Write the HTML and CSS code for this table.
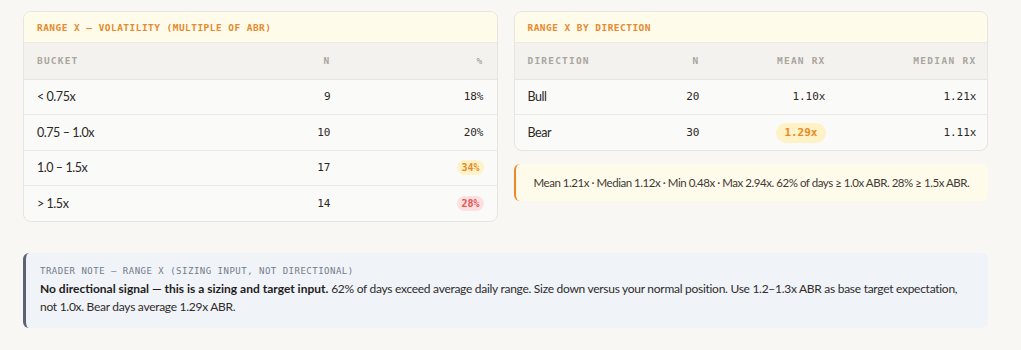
FILE: index.html
```html
<!DOCTYPE html>
<html lang="en">
<head>
<meta charset="utf-8">
<title>Range X</title>
<link rel="stylesheet" href="styles.css">
</head>
<body>
<main class="page">
  <div class="grid">
    <section class="card">
      <header class="card-head">RANGE X — VOLATILITY (MULTIPLE OF ABR)</header>
      <table class="tbl tbl-left">
        <colgroup><col><col class="c-n"><col class="c-pct"></colgroup>
        <thead>
          <tr><th class="l">BUCKET</th><th>N</th><th>%</th></tr>
        </thead>
        <tbody>
          <tr><td class="l">&lt; 0.75x</td><td class="num">9</td><td class="num">18%</td></tr>
          <tr><td class="l">0.75 – 1.0x</td><td class="num">10</td><td class="num">20%</td></tr>
          <tr><td class="l">1.0 – 1.5x</td><td class="num">17</td><td class="num"><span class="badge amber sm">34%</span></td></tr>
          <tr><td class="l">&gt; 1.5x</td><td class="num">14</td><td class="num"><span class="badge red sm">28%</span></td></tr>
        </tbody>
      </table>
    </section>
    <div class="col">
      <section class="card">
        <header class="card-head">RANGE X BY DIRECTION</header>
        <table class="tbl tbl-right">
          <colgroup><col class="d-dir"><col class="d-n"><col class="d-mean"><col class="d-med"></colgroup>
          <thead>
            <tr><th class="l">DIRECTION</th><th>N</th><th>MEAN RX</th><th>MEDIAN RX</th></tr>
          </thead>
          <tbody>
            <tr><td class="l">Bull</td><td class="num">20</td><td class="num">1.10x</td><td class="num">1.21x</td></tr>
            <tr><td class="l">Bear</td><td class="num">30</td><td class="num"><span class="badge amber">1.29x</span></td><td class="num">1.11x</td></tr>
          </tbody>
        </table>
      </section>
      <div class="callout">Mean 1.21x · Median 1.12x · Min 0.48x · Max 2.94x. 62% of days ≥ 1.0x ABR. 28% ≥ 1.5x ABR.</div>
    </div>
  </div>
  <aside class="note">
    <div class="note-title">TRADER NOTE — RANGE X (SIZING INPUT, NOT DIRECTIONAL)</div>
    <p class="note-body"><strong>No directional signal — this is a sizing and target input.</strong> 62% of days exceed average daily range. Size down versus your normal position. Use 1.2–1.3x ABR as base target expectation, not 1.0x. Bear days average 1.29x ABR.</p>
  </aside>
</main>
</body>
</html>
```

FILE: styles.css
```css
* { box-sizing: border-box; }
html, body { margin: 0; padding: 0; }
body {
  background: #f8f7f4;
  font-family: Lato, "Noto Sans", sans-serif;
  color: #2b2724;
}
.page {
  padding: 11px 33px 20px 23px;
}
.grid {
  display: grid;
  grid-template-columns: minmax(0, 1fr) minmax(0, 1fr);
  gap: 16px;
  align-items: start;
}
.col {
  display: flex;
  flex-direction: column;
  gap: 13px;
  min-width: 0;
}
.card {
  background: #fafaf8;
  border: 1px solid #e7e5e0;
  border-radius: 8px;
  overflow: hidden;
}
.card-head {
  height: 31px;
  display: flex;
  align-items: center;
  padding: 0 13px;
  background: #fffbeb;
  border-bottom: 1px solid #eeeae0;
  font-family: "DejaVu Sans Mono", monospace;
  font-size: 9.5px;
  font-weight: bold;
  letter-spacing: 0.45px;
  color: #e68a2e;
}
.tbl {
  width: 100%;
  border-collapse: collapse;
  table-layout: fixed;
}
.tbl-left .c-n { width: 115px; }
.tbl-left .c-pct { width: 153px; }
.tbl-right .d-dir { width: 102px; }
.tbl-right .d-n { width: 96px; }
.tbl-right .d-mean { width: 126px; }
.tbl-right .d-med { width: 151px; }
.tbl th {
  height: 36px;
  background: #f3f2ee;
  border-bottom: 1px solid #e7e5e0;
  padding: 0 13px;
  text-align: right;
  font-family: "DejaVu Sans Mono", monospace;
  font-size: 9.5px;
  font-weight: bold;
  letter-spacing: 1.2px;
  color: #aaa59f;
}
.tbl th:last-child { letter-spacing: 1.3px; }
.tbl td {
  height: 35.5px;
  padding: 0 13px;
  text-align: right;
  border-bottom: 1px solid #ebe9e4;
  font-size: 12.5px;
  letter-spacing: -0.45px;
  color: #2b2724;
}
.tbl tbody tr:last-child td { border-bottom: none; }
.tbl .l { text-align: left; }
.tbl td.num {
  font-family: "DejaVu Sans Mono", monospace;
  font-size: 11px;
  letter-spacing: 0;
}
.badge {
  display: inline-block;
  border-radius: 10px;
  font-family: "DejaVu Sans Mono", monospace;
  font-weight: bold;
  font-size: 11px;
  line-height: 20px;
  padding: 0 8px;
}
.badge.sm {
  font-size: 10px;
  line-height: 15px;
  padding: 0 4px;
  border-radius: 8px;
}
.amber { background: #fef2c6; color: #e58a2a; }
.red { background: #fde1e1; color: #e05454; }
.callout {
  background: #fffbeb;
  border-left: 2px solid #e8892a;
  border-radius: 6px;
  padding: 11px 6px 11px 18px;
  font-size: 11.5px;
  letter-spacing: -0.46px;
  line-height: 15px;
  color: #3f3a36;
}
.note {
  margin-top: 31px;
  background: #f0f3f8;
  border-left: 3px solid #5b6477;
  border-radius: 6px;
  padding: 12px 18px 12px 14px;
}
.note-title {
  font-family: "DejaVu Sans Mono", monospace;
  font-size: 9px;
  letter-spacing: 0.5px;
  color: #737b88;
  line-height: 12px;
}
.note-body {
  margin: 3px 0 0;
  font-size: 12px;
  letter-spacing: -0.28px;
  line-height: 18px;
  color: #2f2c2a;
}
.note-body strong { font-weight: 700; color: #1f1d1b; letter-spacing: 0; }
```
